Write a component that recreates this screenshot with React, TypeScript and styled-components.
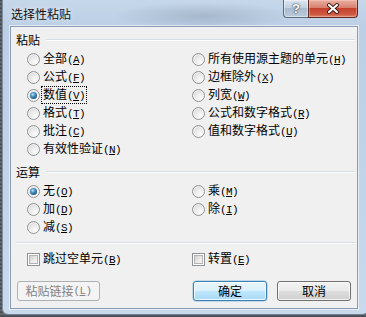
import React from 'react';
import styled, { createGlobalStyle, css } from 'styled-components';

const GlobalStyle = createGlobalStyle`
  html, body {
    margin: 0;
    padding: 0;
    background: #4e545c;
  }
  body {
    font-family: "Noto Sans CJK SC", "Liberation Sans", sans-serif;
    font-size: 12px;
    color: #000;
  }
`;

type Opt = { text: string; key: string; checked?: boolean; focused?: boolean };

const pasteLeft: Opt[] = [
  { text: '全部', key: 'A' },
  { text: '公式', key: 'F' },
  { text: '数值', key: 'V', checked: true, focused: true },
  { text: '格式', key: 'T' },
  { text: '批注', key: 'C' },
  { text: '有效性验证', key: 'N' },
];

const pasteRight: Opt[] = [
  { text: '所有使用源主题的单元', key: 'H' },
  { text: '边框除外', key: 'X' },
  { text: '列宽', key: 'W' },
  { text: '公式和数字格式', key: 'R' },
  { text: '值和数字格式', key: 'U' },
];

const opLeft: Opt[] = [
  { text: '无', key: 'O', checked: true },
  { text: '加', key: 'D' },
  { text: '减', key: 'S' },
];

const opRight: Opt[] = [
  { text: '乘', key: 'M' },
  { text: '除', key: 'I' },
];

const Mnemonic = ({ k }: { k: string }) => (
  <Mono>
    (<u>{k}</u>)
  </Mono>
);

const Radio = ({ opt }: { opt: Opt }) => (
  <OptionRow>
    <RadioCircle $checked={opt.checked} />
    <OptionLabel $focused={opt.focused}>
      {opt.text}
      <Mnemonic k={opt.key} />
    </OptionLabel>
  </OptionRow>
);

const Check = ({ text, k }: { text: string; k: string }) => (
  <OptionRow>
    <CheckBox />
    <OptionLabel>
      {text}
      <Mnemonic k={k} />
    </OptionLabel>
  </OptionRow>
);

const App = (): JSX.Element => {
  return (
    <Desktop>
      <GlobalStyle />
      <Window>
        <TitleBar>
          <TitleText>选择性粘贴</TitleText>
          <CaptionButtons>
            <HelpButton>?</HelpButton>
            <CloseButton>
              <svg width="14" height="11" viewBox="0 0 14 11">
                <path d="M3 2 L11 9 M11 2 L3 9" stroke="#3a1712" strokeWidth="4" strokeLinecap="round" />
                <path d="M3 2 L11 9 M11 2 L3 9" stroke="#ffffff" strokeWidth="2.2" strokeLinecap="round" />
              </svg>
            </CloseButton>
          </CaptionButtons>
        </TitleBar>
        <Client>
          <GroupHeader>
            <GroupLabel>粘贴</GroupLabel>
            <EtchedLine />
          </GroupHeader>
          <OptionGrid>
            <OptionColumn>
              {pasteLeft.map((o) => (
                <Radio key={o.key} opt={o} />
              ))}
            </OptionColumn>
            <OptionColumn>
              {pasteRight.map((o) => (
                <Radio key={o.key} opt={o} />
              ))}
            </OptionColumn>
          </OptionGrid>

          <GroupHeader $gapTop={8}>
            <GroupLabel>运算</GroupLabel>
            <EtchedLine />
          </GroupHeader>
          <OptionGrid>
            <OptionColumn>
              {opLeft.map((o) => (
                <Radio key={o.key} opt={o} />
              ))}
            </OptionColumn>
            <OptionColumn>
              {opRight.map((o) => (
                <Radio key={o.key} opt={o} />
              ))}
            </OptionColumn>
          </OptionGrid>

          <Separator />
          <CheckGrid>
            <Check text="跳过空单元" k="B" />
            <Check text="转置" k="E" />
          </CheckGrid>

          <ButtonRow>
            <PushButton $variant="disabled" $width={83}>
              粘贴链接<Mnemonic k="L" />
            </PushButton>
            <RightButtons>
              <PushButton $variant="default" $width={74}>确定</PushButton>
              <PushButton $width={74}>取消</PushButton>
            </RightButtons>
          </ButtonRow>
        </Client>
      </Window>
    </Desktop>
  );
};

export default App;

const Desktop = styled.div`
  width: 366px;
  height: 317px;
  overflow: hidden;
  background: repeating-linear-gradient(180deg, #3e434a 0px, #6a7079 2px, #474c53 4px);
`;

const Window = styled.div`
  box-sizing: border-box;
  margin-left: 2px;
  width: 366px;
  height: 315px;
  display: flex;
  flex-direction: column;
  padding: 0 10px 5px 7px;
  border-left: 1px solid #7f8fa1;
  border-bottom: 1px solid #6f8096;
  border-radius: 0 0 6px 6px;
  background:
    radial-gradient(ellipse 90px 14px at 200px 16px, rgba(120, 135, 155, 0.35), rgba(120, 135, 155, 0) 100%),
    linear-gradient(180deg, #c6d7ea 0px, #bccfe5 26px, #c2d4e8 60%, #c9daec 100%);
`;

const TitleBar = styled.div`
  height: 26px;
  display: flex;
  align-items: flex-start;
  flex: none;
`;

const TitleText = styled.div`
  padding: 8px 0 0 1px;
  font-size: 12px;
  line-height: 12px;
  color: #111;
  text-shadow: 0 0 6px rgba(255, 255, 255, 0.9);
`;

const CaptionButtons = styled.div`
  margin-left: auto;
  display: flex;
`;

const HelpButton = styled.div`
  box-sizing: border-box;
  width: 25px;
  height: 18px;
  display: flex;
  align-items: center;
  justify-content: center;
  border: 1px solid #5d6b7e;
  border-top: none;
  border-right: none;
  border-radius: 0 0 0 4px;
  background: linear-gradient(180deg, #dbe5f0 0%, #c2d0e0 45%, #a9bbcf 50%, #bccbdc 100%);
  box-shadow: inset 0 0 0 1px rgba(255, 255, 255, 0.45);
  color: #fff;
  font-family: "Liberation Sans", sans-serif;
  font-weight: bold;
  font-size: 13px;
  text-shadow: 0 0 1px #2d3a4a, 0 0 2px #2d3a4a;
`;

const CloseButton = styled.div`
  box-sizing: border-box;
  width: 50px;
  height: 18px;
  display: flex;
  align-items: center;
  justify-content: center;
  border: 1px solid #5e2a22;
  border-top: none;
  border-radius: 0 0 4px 0;
  background: linear-gradient(180deg, #e9b0a2 0%, #d8806f 45%, #c5412d 50%, #cf5a45 85%, #e08a6f 100%);
  box-shadow: inset 0 0 0 1px rgba(255, 220, 210, 0.35);
`;

const Client = styled.div`
  flex: 1;
  box-sizing: border-box;
  display: flex;
  flex-direction: column;
  padding: 7px 2px 0 5px;
  background: #f0f0f0;
  border: 1px solid #8a9db3;
  box-shadow: 0 0 0 1px rgba(255, 255, 255, 0.55);
`;

const GroupHeader = styled.div<{ $gapTop?: number }>`
  display: flex;
  align-items: center;
  height: 12px;
  margin-top: ${(p) => p.$gapTop ?? 0}px;
`;

const GroupLabel = styled.div`
  font-size: 12px;
  line-height: 12px;
`;

const EtchedLine = styled.div`
  flex: 1;
  margin-left: 6px;
  border-top: 1px solid #d5dfe5;
  border-bottom: 1px solid #ffffff;
`;

const OptionGrid = styled.div`
  display: grid;
  grid-template-columns: 165px 1fr;
  margin: 4px 0 0 11px;
`;

const OptionColumn = styled.div`
  display: flex;
  flex-direction: column;
`;

const OptionRow = styled.div`
  display: flex;
  align-items: center;
  height: 18px;
  gap: 3px;
`;

const OptionLabel = styled.div<{ $focused?: boolean }>`
  font-size: 12px;
  line-height: 12px;
  white-space: nowrap;
  ${(p) =>
    p.$focused &&
    css`
      outline: 1px dotted #000;
      outline-offset: 1px;
    `}
`;

const Mono = styled.span`
  font-family: "Liberation Mono", "DejaVu Sans Mono", monospace;
  font-size: 11px;
  letter-spacing: -0.6px;

  u {
    text-underline-offset: 1px;
  }
`;

const RadioCircle = styled.span<{ $checked?: boolean }>`
  position: relative;
  flex: none;
  width: 13px;
  height: 13px;
  box-sizing: border-box;
  border-radius: 50%;
  border: 1px solid #8f9294;
  background: radial-gradient(circle at 65% 70%, #fbfbfb 0%, #e9e9e9 45%, #cfcfcf 100%);
  box-shadow: inset 0 0 0 1px rgba(255, 255, 255, 0.7);

  ${(p) =>
    p.$checked &&
    css`
      &::after {
        content: '';
        position: absolute;
        left: 2px;
        top: 2px;
        width: 7px;
        height: 7px;
        border-radius: 50%;
        background: radial-gradient(circle at 40% 35%, #b9e2f8 0%, #4a92c4 35%, #1b4c7a 80%, #143a60 100%);
      }
    `}
`;

const CheckBox = styled.span`
  position: relative;
  flex: none;
  width: 13px;
  height: 13px;
  box-sizing: border-box;
  border: 1px solid #8f9294;
  background: #fff;

  &::after {
    content: '';
    position: absolute;
    left: 1px;
    top: 1px;
    right: 1px;
    bottom: 1px;
    border: 1px solid #b4b4b4;
    background: linear-gradient(135deg, #d1d1d1 0%, #e9e9e9 55%, #f7f7f7 100%);
  }
`;

const Separator = styled.div`
  margin-top: 6px;
  border-top: 1px solid #d5dfe5;
  border-bottom: 1px solid #ffffff;
`;

const CheckGrid = styled.div`
  display: grid;
  grid-template-columns: 165px 1fr;
  margin: 6px 0 0 11px;
`;

const ButtonRow = styled.div`
  display: flex;
  align-items: center;
  margin: 13px 4px 0 1px;
`;

const RightButtons = styled.div`
  margin-left: auto;
  display: flex;
  gap: 10px;
`;

const PushButton = styled.div<{ $variant?: 'default' | 'disabled'; $width: number }>`
  box-sizing: border-box;
  width: ${(p) => p.$width}px;
  height: 20px;
  display: flex;
  align-items: center;
  justify-content: center;
  border-radius: 3px;
  font-size: 12px;
  line-height: 12px;
  white-space: nowrap;
  border: 1px solid #707070;
  color: #000;
  background: linear-gradient(180deg, #f2f2f2 0%, #ebebeb 48%, #dddddd 52%, #cfcfcf 100%);
  box-shadow: inset 0 0 0 1px rgba(255, 255, 255, 0.75);

  ${(p) =>
    p.$variant === 'default' &&
    css`
      border-color: #3c7fb1;
      background: linear-gradient(180deg, #eaf6fd 0%, #d9f0fc 48%, #bee6fd 52%, #a7d9f5 100%);
      box-shadow: inset 0 0 0 1px rgba(255, 255, 255, 0.8), 0 0 0 0.5px #8ec3e6;
    `}

  ${(p) =>
    p.$variant === 'disabled' &&
    css`
      border-color: #adb2b5;
      color: #838383;
      background: #f4f4f4;
      box-shadow: none;
    `}
`;
